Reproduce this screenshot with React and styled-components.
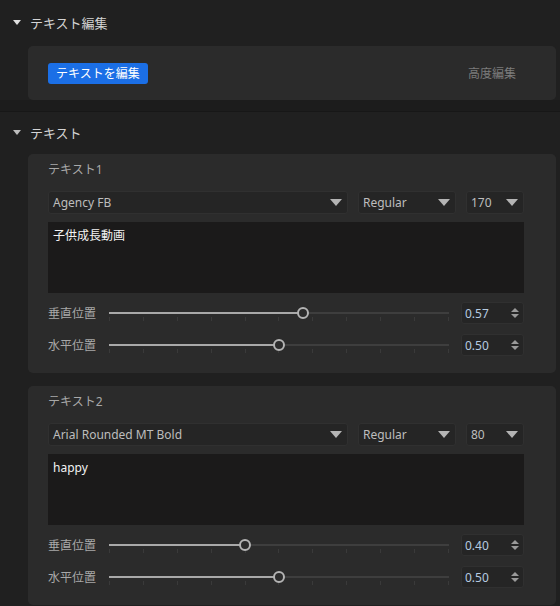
import React from "react";
import styled, { createGlobalStyle } from "styled-components";

const Global = createGlobalStyle`
  html, body { margin: 0; padding: 0; background: #202020; }
  body { font-family: "Noto Sans", "Noto Sans CJK JP", sans-serif; font-size: 12px; overflow: hidden; }
  * { box-sizing: border-box; }
`;

const Page = styled.div`
  width: 560px;
  height: 606px;
  background: #202020;
  overflow: hidden;
`;

const Header = styled.div`
  height: ${(p) => p.$h}px;
  display: flex;
  align-items: center;
  padding-left: 13px;
  gap: 9px;
  color: #d4d4d4;
  font-size: 13px;
`;

const Caret = styled.span`
  width: 0;
  height: 0;
  border-left: 4px solid transparent;
  border-right: 4px solid transparent;
  border-top: 5px solid ${(p) => p.$c || "#e0e0e0"};
`;

const Card = styled.div`
  margin: ${(p) => p.$mt || 0}px 4px 0 28px;
  background: #2b2b2b;
  border-radius: 5px;
`;

const ActionCard = styled(Card)`
  height: 54px;
  display: flex;
  align-items: center;
  justify-content: space-between;
  padding: 0 40px 0 20px;
`;

const PrimaryButton = styled.button`
  height: 21px;
  padding: 0 8px;
  border: none;
  border-radius: 3px;
  background: #1b6fe6;
  color: #ffffff;
  font-family: inherit;
  font-size: 12px;
  line-height: 21px;
`;

const GhostLink = styled.span`
  color: #7c7c7c;
  font-size: 12px;
`;

const Divider = styled.div`
  height: 12px;
  margin-top: 0;
  background: #1c1c1c;
  border-bottom: 1px solid #171717;
`;

const TextCard = styled(Card)`
  padding: 8px 32px 17px 20px;
  display: flex;
  flex-direction: column;
`;

const CardTitle = styled.div`
  height: 16px;
  line-height: 16px;
  color: #a8a8a8;
  font-size: 12px;
`;

const SelectRow = styled.div`
  margin-top: 13px;
  display: flex;
  gap: 10px;
`;

const Select = styled.div`
  width: ${(p) => p.$w}px;
  height: 23px;
  display: flex;
  align-items: center;
  justify-content: space-between;
  padding: 0 5px 0 4px;
  background: #252525;
  border: 1px solid #303030;
  border-radius: 3px;
  color: #bdbdbd;
  font-size: 12px;
`;

const SelectArrow = styled.span`
  width: 0;
  height: 0;
  border-left: 6px solid transparent;
  border-right: 6px solid transparent;
  border-top: 7px solid #b4b4b4;
`;

const TextArea = styled.div`
  margin-top: 8px;
  height: 71px;
  background: #1b1a1a;
  color: #f2f2f2;
  padding: 6px 5px;
  font-size: 12px;
  line-height: 16px;
`;

const SliderRows = styled.div`
  margin-top: 9px;
  display: flex;
  flex-direction: column;
  gap: 10px;
`;

const SliderRow = styled.div`
  height: 22px;
  display: flex;
  align-items: center;
`;

const Label = styled.span`
  width: 61px;
  color: #a8a8a8;
  font-size: 12px;
`;

const Track = styled.div`
  position: relative;
  width: 340px;
  height: 22px;
`;

const Rail = styled.div`
  position: absolute;
  left: 0;
  right: 0;
  top: 10px;
  height: 2px;
  background: #3e3e3e;
`;

const Fill = styled.div`
  position: absolute;
  left: 0;
  top: 10px;
  height: 2px;
  background: #a9a9a9;
`;

const Ticks = styled.div`
  position: absolute;
  left: 0;
  right: 0;
  top: 15px;
  height: 4px;
  display: flex;
  justify-content: space-between;
`;

const Tick = styled.span`
  width: 1px;
  height: 4px;
  background: #3a3a3a;
`;

const Thumb = styled.div`
  position: absolute;
  top: 5px;
  width: 12px;
  height: 12px;
  margin-left: -6px;
  border-radius: 50%;
  border: 2px solid #b3b3b3;
  background: #2b2b2b;
`;

const Spin = styled.div`
  margin-left: 12px;
  width: 63px;
  height: 22px;
  display: flex;
  align-items: center;
  justify-content: space-between;
  padding: 0 4px 0 3px;
  background: #252525;
  border: 1px solid #303030;
  border-radius: 3px;
  color: #b6cbe0;
  font-size: 12px;
`;

const SpinArrows = styled.span`
  display: flex;
  flex-direction: column;
  gap: 2px;
`;

const Up = styled.span`
  width: 0;
  height: 0;
  border-left: 4px solid transparent;
  border-right: 4px solid transparent;
  border-bottom: 4px solid #9a9a9a;
`;

const Down = styled.span`
  width: 0;
  height: 0;
  border-left: 4px solid transparent;
  border-right: 4px solid transparent;
  border-top: 4px solid #9a9a9a;
`;

function Slider({ label, value }) {
  const pct = value * 100;
  return (
    <SliderRow>
      <Label>{label}</Label>
      <Track>
        <Rail />
        <Fill style={{ width: `${pct}%` }} />
        <Ticks>
          {Array.from({ length: 11 }).map((_, i) => (
            <Tick key={i} />
          ))}
        </Ticks>
        <Thumb style={{ left: `${pct}%` }} />
      </Track>
      <Spin>
        <span>{value.toFixed(2)}</span>
        <SpinArrows>
          <Up />
          <Down />
        </SpinArrows>
      </Spin>
    </SliderRow>
  );
}

function TextBlock({ title, font, size, text, v, h, mt }) {
  return (
    <TextCard $mt={mt}>
      <CardTitle>{title}</CardTitle>
      <SelectRow>
        <Select $w={300}>
          <span>{font}</span>
          <SelectArrow />
        </Select>
        <Select $w={98}>
          <span>Regular</span>
          <SelectArrow />
        </Select>
        <Select $w={58}>
          <span>{size}</span>
          <SelectArrow />
        </Select>
      </SelectRow>
      <TextArea>{text}</TextArea>
      <SliderRows>
        <Slider label="垂直位置" value={v} />
        <Slider label="水平位置" value={h} />
      </SliderRows>
    </TextCard>
  );
}

export default function App() {
  return (
    <Page>
      <Global />
      <Header $h={44}>
        <Caret />
        <span>テキスト編集</span>
      </Header>
      <ActionCard $mt={2}>
        <PrimaryButton>テキストを編集</PrimaryButton>
        <GhostLink>高度編集</GhostLink>
      </ActionCard>
      <Divider />
      <Header $h={40}>
        <Caret $c="#bdbdbd" />
        <span>テキスト</span>
      </Header>
      <TextBlock
        mt={2}
        title="テキスト1"
        font="Agency FB"
        size="170"
        text="子供成長動画"
        v={0.57}
        h={0.5}
      />
      <TextBlock
        mt={13}
        title="テキスト2"
        font="Arial Rounded MT Bold"
        size="80"
        text="happy"
        v={0.4}
        h={0.5}
      />
    </Page>
  );
}
